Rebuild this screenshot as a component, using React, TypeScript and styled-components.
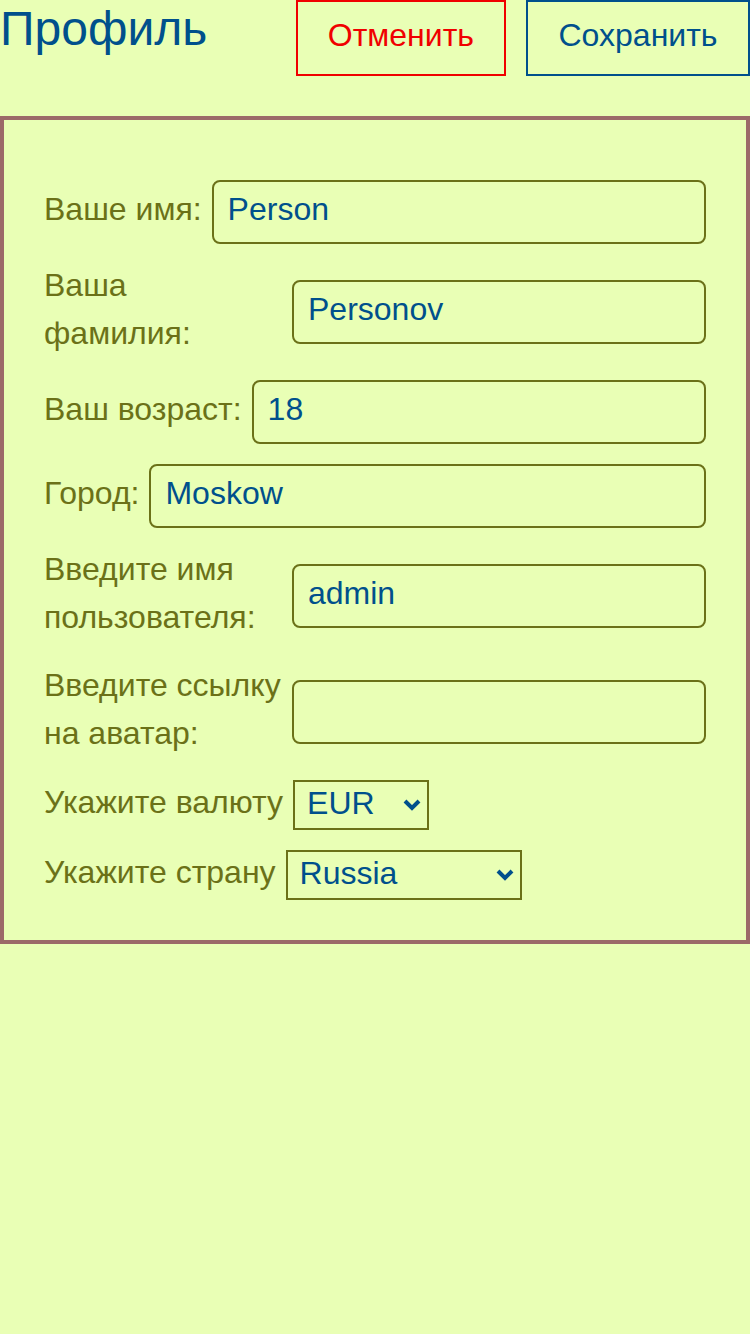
import styled, { createGlobalStyle } from 'styled-components'

const GlobalStyle = createGlobalStyle`
    html, body {
        margin: 0;
        padding: 0;
        background: #e9ffb5;
        font-family: "Liberation Sans", Arial, sans-serif;
    }
`

const fields = [
    { label: 'Ваше имя:', value: 'Person' },
    { label: 'Ваша фамилия:', value: 'Personov' },
    { label: 'Ваш возраст:', value: '18' },
    { label: 'Город:', value: 'Moskow' },
    { label: 'Введите имя пользователя:', value: 'admin' },
    { label: 'Введите ссылку на аватар:', value: '' },
]

const Chevron = () => (
    <ChevronIcon width="18" height="12" viewBox="0 0 18 12">
        <path
            d="M2 2 L9 9 L16 2"
            fill="none"
            stroke="currentColor"
            strokeWidth="4"
        />
    </ChevronIcon>
)

export default function App() {
    return (
        <>
            <GlobalStyle />
            <Page>
                <Header>
                    <Title>Профиль</Title>
                    <Actions>
                        <Button $variant="cancel">Отменить</Button>
                        <Button $variant="save">Сохранить</Button>
                    </Actions>
                </Header>
                <Card>
                    {fields.map(({ label, value }) => (
                        <Row key={label}>
                            <Label>{label}</Label>
                            <Input defaultValue={value} />
                        </Row>
                    ))}
                    <Row>
                        <SelectLabel>Укажите валюту</SelectLabel>
                        <SelectBox $width={136}>
                            <Select defaultValue="EUR">
                                <option>RUB</option>
                                <option>EUR</option>
                                <option>USD</option>
                            </Select>
                            <Chevron />
                        </SelectBox>
                    </Row>
                    <Row>
                        <SelectLabel>Укажите страну</SelectLabel>
                        <SelectBox $width={236}>
                            <Select defaultValue="Russia">
                                <option>Russia</option>
                                <option>Belarus</option>
                                <option>Ukraine</option>
                                <option>Kazakhstan</option>
                                <option>Armenia</option>
                            </Select>
                            <Chevron />
                        </SelectBox>
                    </Row>
                </Card>
            </Page>
        </>
    )
}

const Page = styled.div`
    width: 750px;
    min-height: 1334px;
`

const Header = styled.header`
    display: flex;
    justify-content: space-between;
    align-items: flex-start;
    height: 76px;
    margin-bottom: 40px;
`

const Title = styled.h1`
    margin: 0;
    font-size: 48px;
    font-weight: 400;
    line-height: 57px;
    color: #00508c;
`

const Actions = styled.div`
    display: flex;
    gap: 20px;
`

const Button = styled.button<{ $variant: 'cancel' | 'save' }>`
    box-sizing: border-box;
    height: 76px;
    padding: 0 ${({ $variant }) => ($variant === 'cancel' ? '30px' : '30.5px')}
        5px;
    font-family: inherit;
    font-size: 32px;
    background: transparent;
    cursor: pointer;
    color: ${({ $variant }) => ($variant === 'cancel' ? '#f00000' : '#00508c')};
    border: 2px solid
        ${({ $variant }) => ($variant === 'cancel' ? '#f00000' : '#00508c')};
`

const Card = styled.section`
    box-sizing: border-box;
    display: flex;
    flex-direction: column;
    gap: 20px;
    padding: 60px 40px 40px 40px;
    border: 4px solid #9b6a68;
`

const Row = styled.div`
    display: flex;
    align-items: center;
    gap: 10px;
`

const Label = styled.label`
    flex: 0 0 auto;
    max-width: 238px;
    margin: -3px 0 3px;
    font-size: 32px;
    line-height: 48px;
    color: #6b7118;
`

const SelectLabel = styled(Label)`
    max-width: none;
    white-space: nowrap;
`

const Input = styled.input`
    box-sizing: border-box;
    flex: 1;
    min-width: 0;
    height: 64px;
    padding: 0 14px 6px;
    font-family: inherit;
    font-size: 32px;
    color: #00508c;
    background: transparent;
    border: 2px solid #6b7118;
    border-radius: 8px;
    outline: none;
`

const SelectBox = styled.div<{ $width: number }>`
    position: relative;
    width: ${({ $width }) => $width}px;
    color: #00508c;
`

const Select = styled.select`
    box-sizing: border-box;
    display: block;
    width: 100%;
    height: 50px;
    padding: 0 30px 5px 12px;
    font-family: inherit;
    font-size: 32px;
    color: #00508c;
    background: transparent;
    border: 2px solid #6b7118;
    border-radius: 0;
    outline: none;
    appearance: none;
`

const ChevronIcon = styled.svg`
    position: absolute;
    right: 8px;
    top: 19px;
    pointer-events: none;
`
